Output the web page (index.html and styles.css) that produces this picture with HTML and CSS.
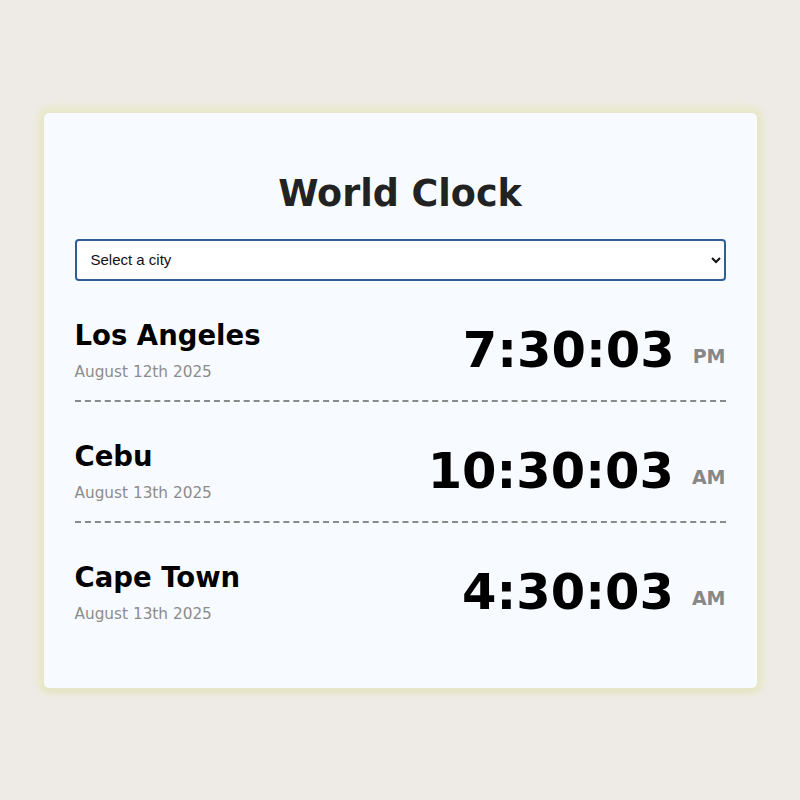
FILE: index.html
```html
<!DOCTYPE html>
<html lang="en">
<head>
<meta charset="utf-8">
<title>World Clock</title>
<link rel="stylesheet" href="styles.css">
</head>
<body>
<main class="card">
  <h1 class="title">World Clock</h1>
  <select class="city-select">
    <option>Select a city</option>
  </select>
  <div class="clocks">
    <div class="clock-row">
      <div class="place">
        <h2 class="city">Los Angeles</h2>
        <div class="date">August 12th 2025</div>
      </div>
      <div class="time">7:30:03<span class="ampm">PM</span></div>
    </div>
    <div class="clock-row">
      <div class="place">
        <h2 class="city">Cebu</h2>
        <div class="date">August 13th 2025</div>
      </div>
      <div class="time">10:30:03<span class="ampm">AM</span></div>
    </div>
    <div class="clock-row">
      <div class="place">
        <h2 class="city">Cape Town</h2>
        <div class="date">August 13th 2025</div>
      </div>
      <div class="time">4:30:03<span class="ampm">AM</span></div>
    </div>
  </div>
</main>
</body>
</html>
```

FILE: styles.css
```css
html, body {
  margin: 0;
  padding: 0;
}
body {
  background: #eeebe6;
  min-height: 100vh;
  display: flex;
  align-items: center;
  justify-content: center;
  font-family: "DejaVu Sans", Verdana, sans-serif;
}
.card {
  width: 713px;
  box-sizing: border-box;
  background: #f7fbff;
  border-radius: 5px;
  padding: 35px 31px 46px;
  box-shadow: 0 0 5px 6px rgba(232, 232, 196, 0.85), 0 3px 4px rgba(120, 120, 60, 0.18);
}
.title {
  margin: 24px 0;
  text-align: center;
  font-size: 36.5px;
  font-weight: bold;
  color: #222;
  line-height: normal;
}
.city-select {
  display: block;
  width: 100%;
  height: 42px;
  box-sizing: border-box;
  border: 2px solid #305e93;
  border-radius: 4px;
  background: #fff;
  padding: 0 6px 0 10px;
  font-family: "Liberation Sans", Arial, sans-serif;
  font-size: 15px;
  color: #111;
  margin: 0 0 20px;
}
.clocks {
  display: flex;
  flex-direction: column;
  gap: 20px;
}
.clock-row {
  display: flex;
  justify-content: space-between;
  align-items: center;
  padding: 18px 0;
  border-bottom: 2px dashed #8a8a8a;
}
.clock-row:last-child {
  border-bottom: none;
}
.city {
  margin: 0;
  font-size: 27.5px;
  line-height: 1.2;
  font-weight: bold;
  color: #000;
}
.date {
  margin-top: 10px;
  font-size: 15.3px;
  line-height: 20px;
  color: #8c8c8c;
}
.time {
  font-size: 49.5px;
  font-weight: bold;
  color: #000;
  line-height: normal;
  white-space: nowrap;
}
.ampm {
  font-size: 19px;
  color: #888;
  margin-left: 18px;
  vertical-align: 4px;
}
```
